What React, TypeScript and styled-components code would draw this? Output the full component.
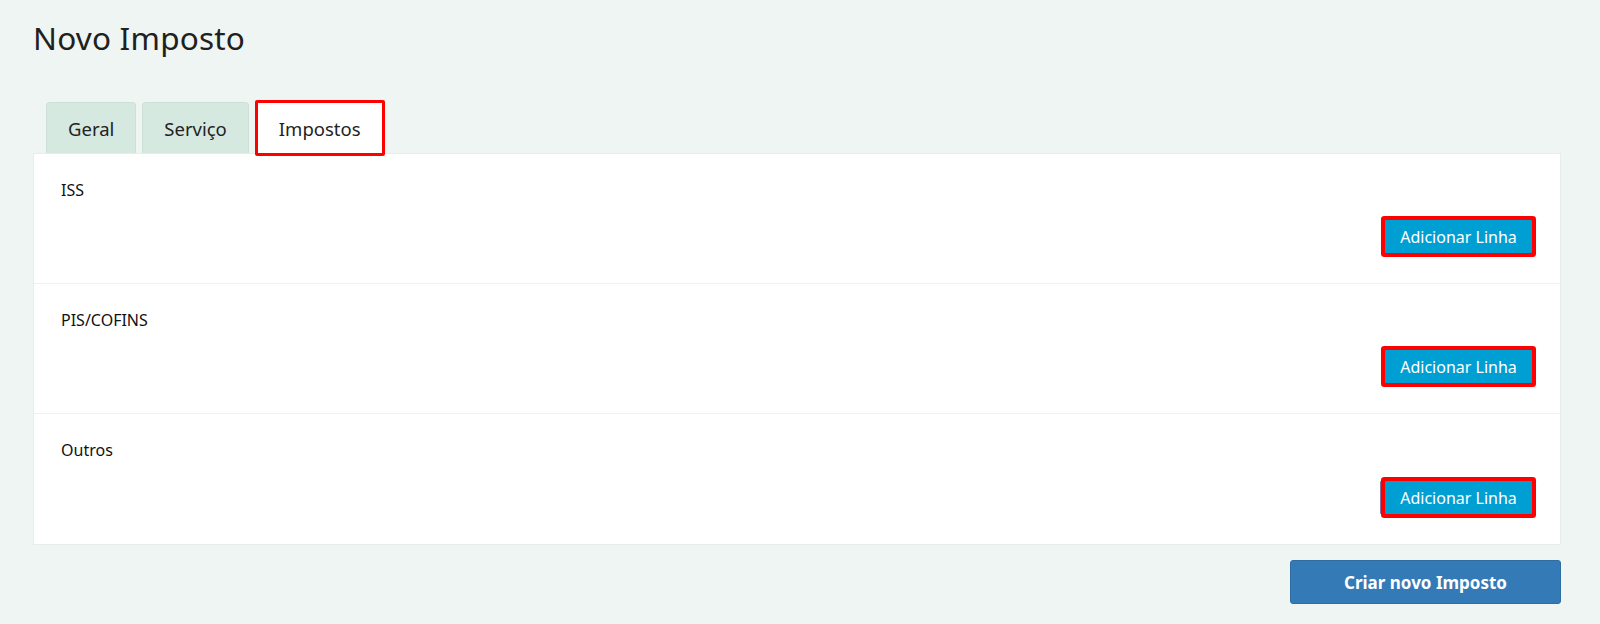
import React from "react";
import styled, { createGlobalStyle } from "styled-components";

const GlobalStyle = createGlobalStyle`
    body{
        margin:0;
        background:#eff5f3;
        font-family:"Noto Sans", "Open Sans", Arial, sans-serif;
        color:#222;
    }
`

const Page = styled.div`
    padding:0 39px 0 33px;
`

const Title = styled.h1`
    margin:0;
    padding-top:16px;
    height:84px;
    font-size:31.5px;
    font-weight:400;
    letter-spacing:0.2px;
    color:#1f2020;
`

const TabRow = styled.div`
    display:flex;
    align-items:flex-end;
    gap:6px;
    padding-left:13px;
    height:53px;
    position:relative;
    z-index:1;
`

const Tab = styled.div<{ $active?: boolean }>`
    box-sizing:border-box;
    display:flex;
    align-items:center;
    justify-content:center;
    height:${p => p.$active ? "56px" : "51px"};
    padding:0 21px;
    margin-bottom:${p => p.$active ? "-3px" : "0"};
    font-size:18.5px;
    color:#222;
    background:${p => p.$active ? "#fff" : "#d6e9e0"};
    border:${p => p.$active ? "3px solid #ff0000" : "1px solid #cde0d7"};
    border-bottom:${p => p.$active ? "3px solid #ff0000" : "none"};
    border-radius:${p => p.$active ? "2px" : "4px 4px 0 0"};
`

const Panel = styled.div`
    background:#fff;
    border:1px solid #e6eeeb;
`

const Section = styled.div`
    box-sizing:border-box;
    height:130px;
    display:flex;
    flex-direction:column;
    padding:25px 28px 30px 27px;
    border-bottom:1px solid #eef2f1;
    &:last-child{ border-bottom:none; }
`

const Label = styled.div`
    font-size:16px;
    color:#111;
`

const AddButton = styled.button<{ $edge?: boolean }>`
    margin-top:auto;
    align-self:flex-end;
    width:147px;
    height:33px;
    border:none;
    border-radius:1px;
    background:#009fd3;
    color:#fff;
    font-family:inherit;
    font-size:16px;
    box-shadow:0 0 0 4px #ff0000${p => p.$edge ? ", -5px 0 0 0 #8a6d9c" : ""};
`

const Footer = styled.div`
    display:flex;
    justify-content:flex-end;
    padding:15px 0 0 0;
`

const CreateButton = styled.button`
    width:271px;
    height:44px;
    border:1px solid #2e6da4;
    border-radius:3px;
    background:#337ab7;
    color:#fff;
    font-family:inherit;
    font-size:17px;
    font-weight:700;
`

const sections = ["ISS", "PIS/COFINS", "Outros"];

function App(){
    return(
        <Page>
            <GlobalStyle />
            <Title>Novo Imposto</Title>
            <TabRow>
                <Tab>Geral</Tab>
                <Tab>Serviço</Tab>
                <Tab $active>Impostos</Tab>
            </TabRow>
            <Panel>
                {sections.map((s, i) => (
                    <Section key={s}>
                        <Label>{s}</Label>
                        <AddButton $edge={i === 2}>Adicionar Linha</AddButton>
                    </Section>
                ))}
            </Panel>
            <Footer>
                <CreateButton>Criar novo Imposto</CreateButton>
            </Footer>
        </Page>
    )
}

export default App;
